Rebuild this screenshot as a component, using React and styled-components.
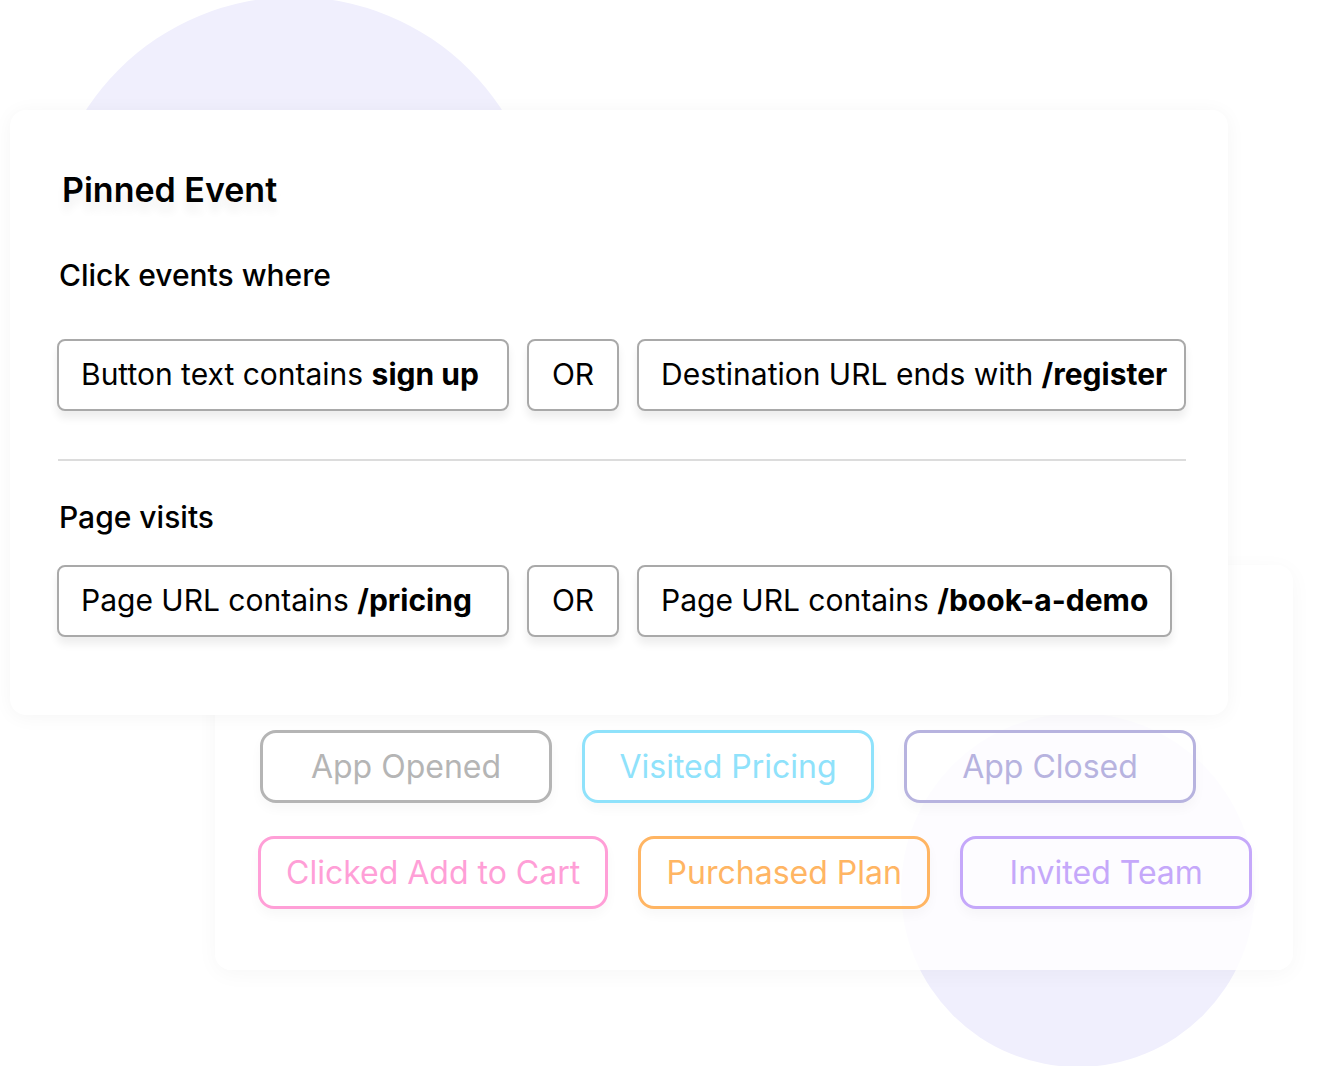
import React from "react";
import styled, { createGlobalStyle } from "styled-components";

const Global = createGlobalStyle`
  html, body { margin: 0; padding: 0; background: #ffffff; }
  body { font-family: Inter, "Noto Sans", sans-serif; color: #000; }
  * { box-sizing: border-box; }
`;

const Stage = styled.div`
  position: relative;
  width: 1320px;
  height: 1066px;
  overflow: hidden;
  display: grid;
  grid-template-columns: 1fr;
  grid-template-rows: 1fr;
  background: #fff;
`;

const Blob = styled.div`
  position: absolute;
  left: ${(p) => p.$x}px;
  top: ${(p) => p.$y}px;
  width: ${(p) => p.$d}px;
  height: ${(p) => p.$d}px;
  border-radius: 50%;
  background: #f0effd;
`;

const TagCard = styled.section`
  position: relative;
  grid-area: 1 / 1;
  align-self: start;
  justify-self: start;
  margin: 565px 0 0 215px;
  width: 1078px;
  height: 405px;
  padding-top: 165px;
  background: rgba(255, 255, 255, 0.82);
  border-radius: 16px;
  box-shadow: 0 4px 22px rgba(0, 0, 0, 0.035);
  display: flex;
  flex-direction: column;
  gap: 33px;
`;

const TagRow = styled.div`
  display: flex;
  gap: 30px;
  padding-left: ${(p) => p.$indent}px;
`;

const Tag = styled.div`
  min-width: 292px;
  height: 73px;
  padding: 0 25px;
  display: flex;
  align-items: center;
  justify-content: center;
  border: 3px solid ${(p) => p.$color};
  border-radius: 16px;
  color: ${(p) => p.$color};
  font-size: 32px;
  line-height: 38px;
  white-space: nowrap;
  box-shadow: 0 6px 12px rgba(0, 0, 0, 0.03);
`;

const MainCard = styled.section`
  position: relative;
  grid-area: 1 / 1;
  align-self: start;
  justify-self: start;
  margin: 110px 0 0 10px;
  width: 1218px;
  height: 605px;
  padding: 60px 42px 0 47px;
  background: #ffffff;
  border-radius: 16px;
  box-shadow: 0 2px 20px rgba(0, 0, 0, 0.045);
  display: flex;
  flex-direction: column;
`;

const Title = styled.h2`
  margin: 0 0 0 5px;
  font-size: 34px;
  line-height: 40px;
  font-weight: 600;
  color: #000;
  text-shadow: 0 10px 8px rgba(0, 0, 0, 0.06);
`;

const Label = styled.div`
  margin: ${(p) => p.$top}px 0 0 2px;
  font-size: 30px;
  line-height: 36px;
  font-weight: 500;
  color: #000;
`;

const PillRow = styled.div`
  display: flex;
  gap: 18px;
  margin-top: ${(p) => p.$top}px;
`;

const Pill = styled.div`
  display: flex;
  align-items: center;
  justify-content: ${(p) => (p.$center ? "center" : "flex-start")};
  min-width: ${(p) => p.$min || 0}px;
  height: 72px;
  padding: 0 22px 2px;
  border: 2px solid #a9a9a9;
  border-radius: 8px;
  background: #fff;
  font-size: 30px;
  line-height: 36px;
  font-weight: 400;
  color: #000;
  white-space: pre;
  box-shadow: 0 7px 9px rgba(0, 0, 0, 0.07);

  b {
    font-weight: 700;
  }
`;

const Divider = styled.hr`
  margin: 48px 0 0 1px;
  border: none;
  height: 2px;
  background: #dcdcdc;
`;

const tags1 = [
  { text: "App Opened", color: "#b5b5b5" },
  { text: "Visited Pricing", color: "#8fe2fb" },
  { text: "App Closed", color: "#b7b3df" },
];
const tags2 = [
  { text: "Clicked Add to Cart", color: "#ff9fd7" },
  { text: "Purchased Plan", color: "#ffb563" },
  { text: "Invited Team", color: "#c5a8fa" },
];

export default function App() {
  return (
    <Stage>
      <Global />
      <Blob $x={46} $y={-3} $d={496} />
      <Blob $x={901} $y={713} $d={354} />

      <TagCard>
        <TagRow $indent={45}>
          {tags1.map((t) => (
            <Tag key={t.text} $color={t.color}>{t.text}</Tag>
          ))}
        </TagRow>
        <TagRow $indent={43}>
          {tags2.map((t) => (
            <Tag key={t.text} $color={t.color}>{t.text}</Tag>
          ))}
        </TagRow>
      </TagCard>

      <MainCard>
        <Title>Pinned Event</Title>
        <Label $top={47}>Click events where</Label>
        <PillRow $top={46}>
          <Pill $min={452}>Button text contains <b>sign up</b></Pill>
          <Pill $min={92} $center>OR</Pill>
          <Pill>Destination URL ends with <b>/register</b></Pill>
        </PillRow>
        <Divider />
        <Label $top={38}>Page visits</Label>
        <PillRow $top={30}>
          <Pill $min={452}>Page URL contains <b>/pricing</b></Pill>
          <Pill $min={92} $center>OR</Pill>
          <Pill>Page URL contains <b>/book-a-demo</b></Pill>
        </PillRow>
      </MainCard>
    </Stage>
  );
}
